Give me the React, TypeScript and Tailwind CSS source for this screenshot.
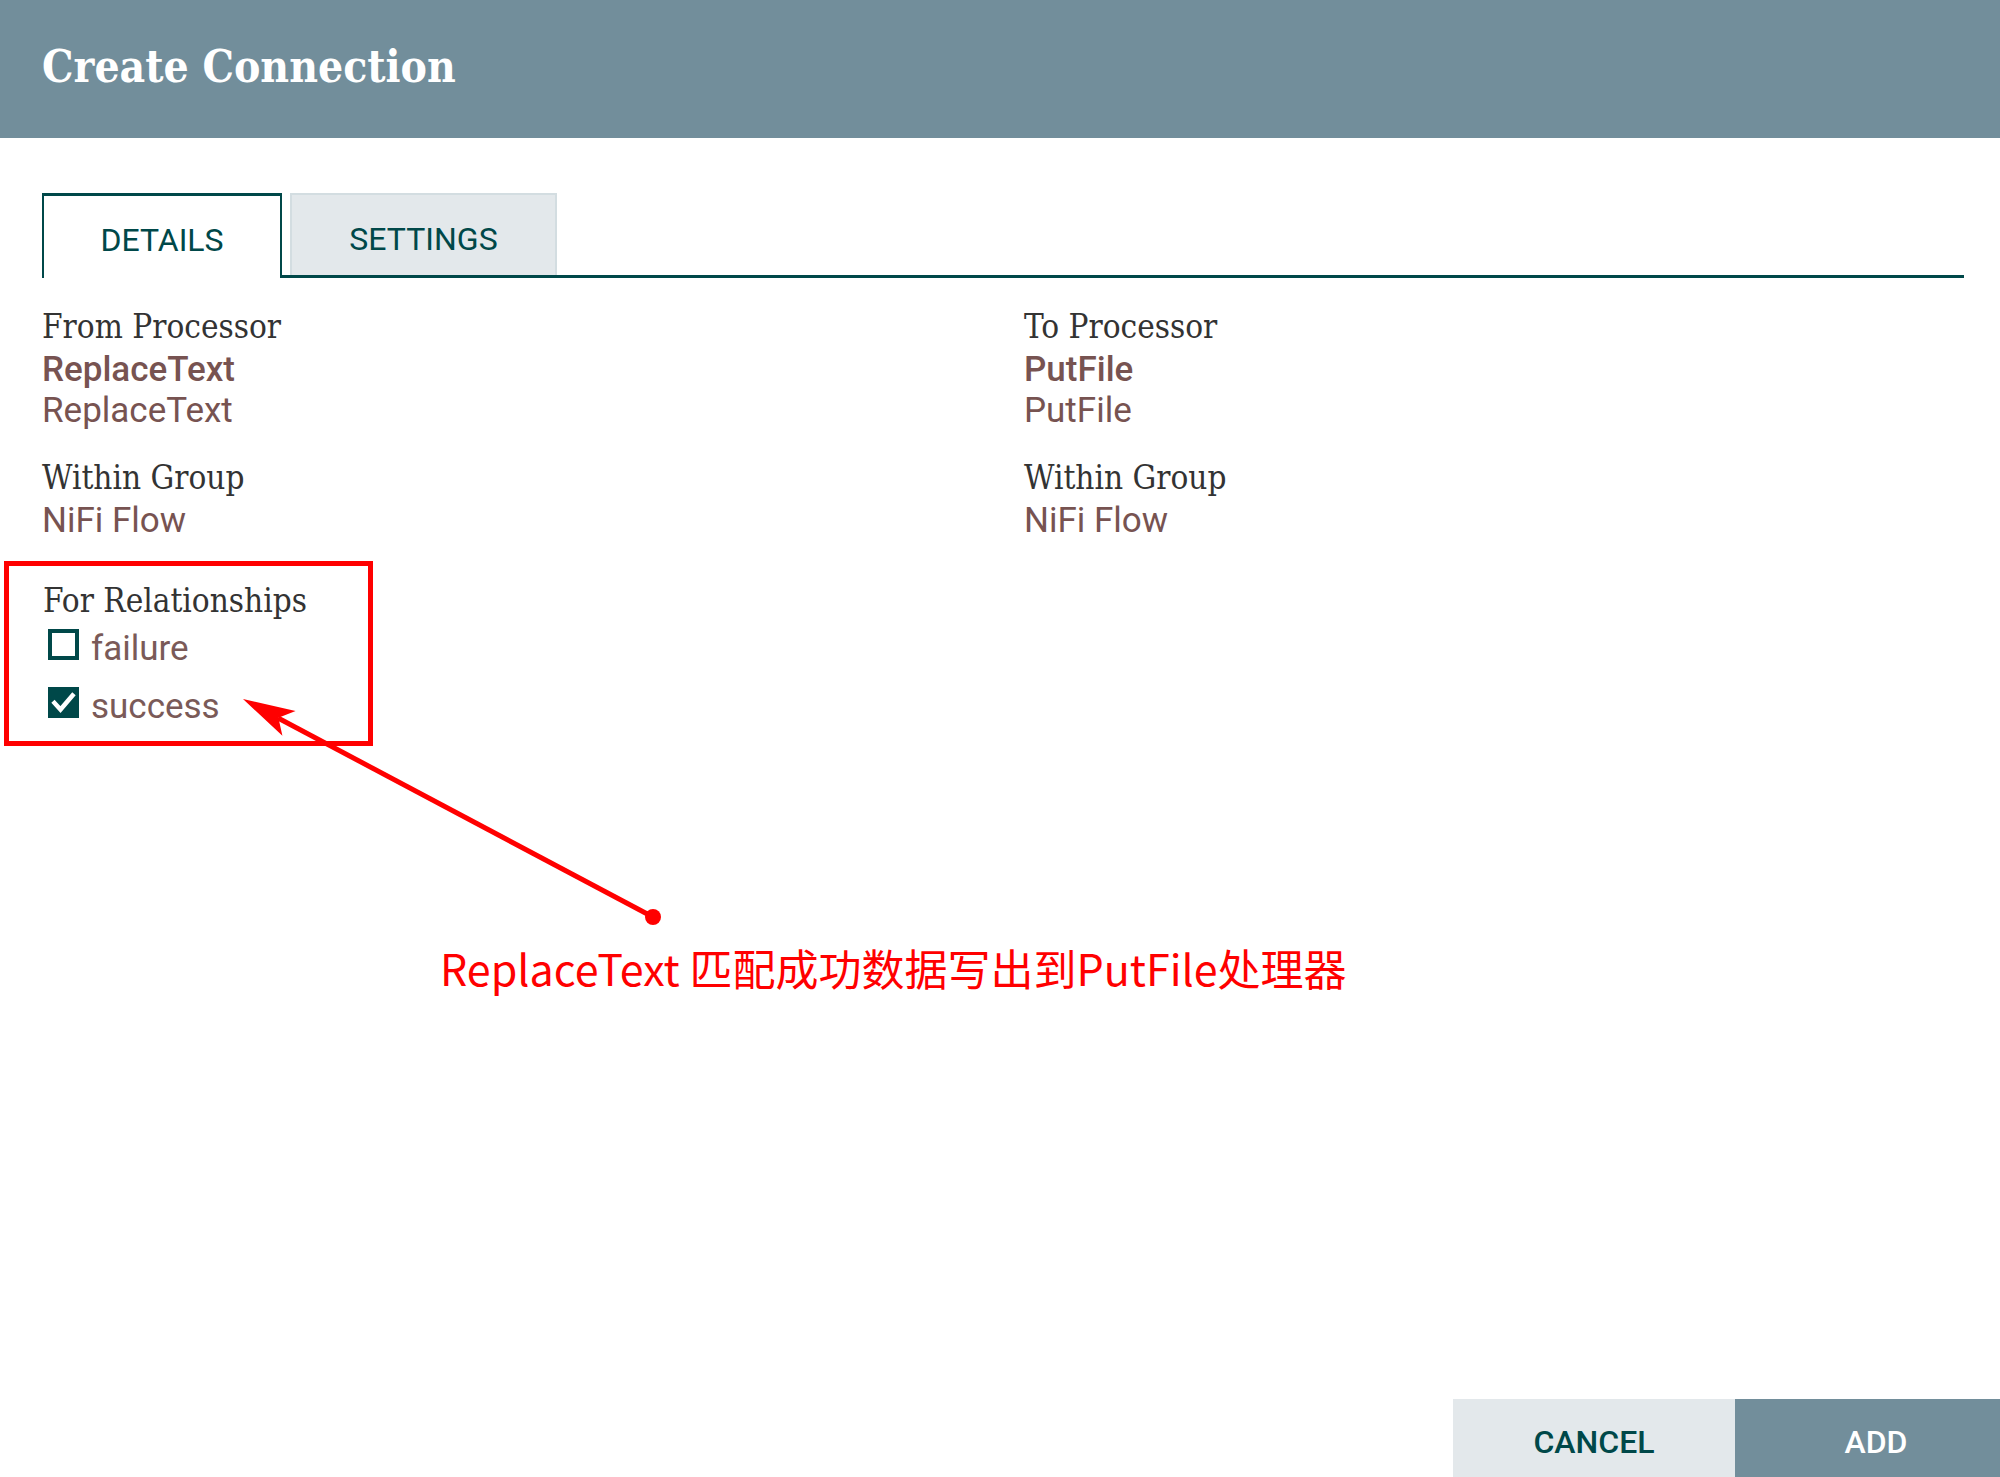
import React from 'react';

const slab = { fontFamily: "'DejaVu Serif', serif" };
const roboto = { fontFamily: "Roboto, 'Liberation Sans', sans-serif" };
const cjk = { fontFamily: "'Noto Sans CJK SC', 'Noto Sans', sans-serif" };

function Label({ children }: { children: React.ReactNode }) {
  return (
    <div className="text-[33px] leading-[41px] text-[#333333] font-stretch-condensed" style={slab}>
      {children}
    </div>
  );
}

function Value({ children, strong }: { children: React.ReactNode; strong?: boolean }) {
  return (
    <div
      className={`text-[35px] leading-[41px] text-[#775351] ${strong ? 'font-medium' : 'font-normal'}`}
      style={roboto}
    >
      {children}
    </div>
  );
}

function Checkbox({ checked }: { checked: boolean }) {
  if (!checked) {
    return <div className="w-[31px] h-[31px] flex-none border-[4px] border-[#004849] bg-white" />;
  }
  return (
    <div className="w-[31px] h-[31px] flex-none bg-[#004849]">
      <svg viewBox="0 0 31 31" className="w-full h-full">
        <path d="M6.5 16 L12.5 22.5 L24.5 8.5" fill="none" stroke="white" strokeWidth="4.5" strokeLinecap="square" />
      </svg>
    </div>
  );
}

export default function App() {
  return (
    <div className="w-[2000px] h-[1477px] overflow-hidden bg-white flex flex-col relative">
      {/* dialog header */}
      <div className="h-[138px] flex-none bg-[#728e9b] pl-[42px] pt-[45px]">
        <h1 className="text-[44px] leading-[44px] font-bold text-white font-stretch-condensed" style={slab}>
          Create Connection
        </h1>
      </div>

      {/* tabs */}
      <div className="mt-[55px] pl-[42px] pr-[36px] flex h-[85px] flex-none">
        <div
          className="w-[240px] h-full border-t-[3px] border-x-2 border-[#004849] bg-white flex items-center justify-center pt-[5px] text-[32px] text-[#004849]"
          style={roboto}
        >
          DETAILS
        </div>
        <div className="flex-1 flex border-b-[3px] border-[#004849]">
          <div
            className="ml-[8px] w-[267px] h-full bg-[#e3e8eb] border-2 border-b-0 border-[#d3dde1] flex items-center justify-center pt-[7px] text-[32px] text-[#004849]"
            style={roboto}
          >
            SETTINGS
          </div>
        </div>
      </div>

      {/* details */}
      <div className="mt-[28px] pl-[42px] grid grid-cols-[982px_1fr] flex-none">
        <div>
          <Label>From Processor</Label>
          <div className="mt-[2px]">
            <Value strong>ReplaceText</Value>
            <Value>ReplaceText</Value>
          </div>
          <div className="mt-[26px]">
            <Label>Within Group</Label>
            <div className="mt-[2px]">
              <Value>NiFi Flow</Value>
            </div>
          </div>
        </div>
        <div>
          <Label>To Processor</Label>
          <div className="mt-[2px]">
            <Value strong>PutFile</Value>
            <Value>PutFile</Value>
          </div>
          <div className="mt-[26px]">
            <Label>Within Group</Label>
            <div className="mt-[2px]">
              <Value>NiFi Flow</Value>
            </div>
          </div>
        </div>
      </div>

      {/* relationships, highlighted */}
      <div className="mt-[20px] ml-[4px] w-[369px] flex-none border-[5px] border-[#ff0000] pl-[34px] pt-[14px] pb-[18px]">
        <Label>For Relationships</Label>
        <div className="mt-[8px] flex flex-col gap-[22px] pl-[5px]">
          <div className="flex items-start gap-[12px]">
            <Checkbox checked={false} />
            <span className="mt-[4px] text-[35px] leading-[32px] text-[#7a5a58]" style={roboto}>failure</span>
          </div>
          <div className="flex items-start gap-[12px]">
            <Checkbox checked />
            <span className="mt-[4px] text-[35px] leading-[32px] text-[#7a5a58]" style={roboto}>success</span>
          </div>
        </div>
      </div>

      {/* annotation text */}
      <div className="mt-[200px] pl-[440px] text-[43px] leading-[43px] text-[#ff0000] flex-none" style={cjk}>
        ReplaceText 匹配成功数据写出到PutFile处理器
      </div>

      <div className="flex-1" />

      {/* footer buttons */}
      <div className="flex justify-end mr-[-17px] flex-none">
        <button className="w-[282px] h-[78px] bg-[#e3e8eb] pt-[27px] flex justify-center items-start text-[32px] leading-[32px] font-medium text-[#004849]" style={roboto}>
          CANCEL
        </button>
        <button className="w-[282px] h-[78px] bg-[#728e9b] pt-[27px] flex justify-center items-start text-[32px] leading-[32px] font-medium text-white" style={roboto}>
          ADD
        </button>
      </div>

      {/* annotation arrow */}
      <svg className="absolute left-0 top-0 pointer-events-none" width="2000" height="1477">
        <line x1="278" y1="718" x2="653" y2="917" stroke="#ff0000" strokeWidth="5" />
        <polygon points="243,699 295.6,711 278.4,717.8 282.4,735.8" fill="#ff0000" />
        <circle cx="653" cy="917" r="8" fill="#ff0000" />
      </svg>
    </div>
  );
}
